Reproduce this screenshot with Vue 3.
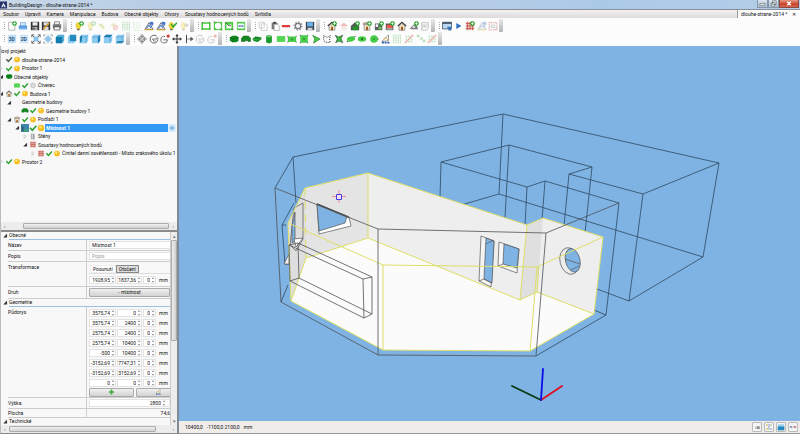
<script setup>
import { ref } from 'vue'

const menus = ['Soubor', 'Upravit', 'Kamera', 'Manipulace', 'Budova', 'Obecné objekty', 'Otvory', 'Soustavy hodnocených bodů', 'Svítidla']

// A trailing "~" marks a disabled command.
const toolbars = [
  [
    { width: 57, items: ['new', 'open', 'save', 'saveas', 'print'] },
    { width: 117, items: ['bulbadd', 'bulbadd~', 'bulbedit~', 'bulbdel~', 'grid~', 'points~', 'cad', 'cad', 'bulbok', 'bulbgo~'] },
    { width: 47, items: ['poly1', 'poly2', 'poly3', 'poly4'] },
    { width: 59, items: ['copy', 'paste', 'minus', 'gear', 'saveblue'] },
    { width: 105, items: ['houseadd', 'roofadd~', 'housegreen', 'floor', 'wallgreen', 'wallred', 'house', 'roofgreen', 'sheet~'] },
    { width: 58, items: ['window', 'play', 'redgrid', 'cad~', 'redframe~'] }
  ],
  [
    { width: 120, items: ['v3d', 'v2d', 'expand', 'fit', 'cube1', 'cube2', 'cube3', 'cube4', 'cube5', 'cube6'] },
    { width: 82, items: ['move', 'rotate', 'rotpoint', 'cross', 'align', 'rotate~', 'rotpoint~'] },
    { width: 210, items: ['prism', 'prism2', 'prism3', 'cylinder', 'rect', 'rectdot', 'sqdot', 'tri', 'polydash', 'star', 'ellipse', 'eye', 'disc', 'cadtext', 'grid~', 'cutgrid~', 'steps~', 'cutgrid~'] }
  ]
]

const tree = [
  { level: 0, icons: [], text: 'Nový projekt', root: true },
  { level: 0, exp: 'none', icons: ['checkdark', 'bulb'], text: 'dlouhe-strane-2014' },
  { level: 0, exp: 'closed', icons: ['check', 'bulb'], text: 'Prostor 1' },
  { level: 0, exp: 'open', icons: ['prism'], text: 'Obecné objekty' },
  { level: 1, exp: 'none', icons: ['rect', 'check', 'bulboff'], text: 'Čtverec' },
  { level: 0, exp: 'open', icons: ['house', 'check', 'bulb'], text: 'Budova 1' },
  { level: 1, exp: 'open', icons: ['blank'], text: 'Geometrie budovy' },
  { level: 2, exp: 'none', icons: ['prism2', 'check', 'bulb'], text: 'Geometrie budovy 1' },
  { level: 1, exp: 'open', icons: ['floorplain', 'check', 'bulb'], text: 'Podlaží 1' },
  { level: 2, exp: 'open', icons: ['room', 'check', 'bulb'], text: 'Místnost 1', selected: true },
  { level: 3, exp: 'closed', icons: ['walls'], text: 'Stěny' },
  { level: 3, exp: 'open', icons: ['pts'], text: 'Soustavy hodnocených bodů' },
  { level: 4, exp: 'closed', icons: ['pts', 'check', 'bulb'], text: 'Činitel denní osvětlenosti - Místo zrakového úkolu 1' },
  { level: 0, exp: 'closed', icons: ['check', 'bulb'], text: 'Prostor 2' }
]

const name = ref('Místnost 1')
const note = ref('')
const height = ref('2800')
const shift = ref(['1928,95', '1837,36', '0'])
const plan = ref([
  ['3575,74', '0', '0'],
  ['3575,74', '2400', '0'],
  ['2575,74', '2400', '0'],
  ['2575,74', '10400', '0'],
  ['-500', '10400', '0'],
  ['-3152,69', '7747,31', '0'],
  ['-3152,69', '3152,69', '0'],
  ['0', '0', '0']
])
const axes = ['X', 'Y', 'Z']
const statusButtons = ['sshape', 'sdots', 'sbox', 'sline']
const isOff = (n) => n.endsWith('~')
const bare = (n) => n.replace('~', '')
</script>

<template>
  <div class="app">
    <svg class="defs" aria-hidden="true">
      <defs>
        <symbol id="plus" viewBox="0 0 12 12"><circle cx="9" cy="3" r="2.8" fill="#25a32c" /><path d="M9 1.4v3.2M7.4 3h3.2" stroke="#fff" stroke-width="1" /></symbol>
        <symbol id="i-new" viewBox="0 0 12 12"><path d="M2 1.5h6.5l1 1.500v8H2z" fill="#fff" stroke="#999" stroke-width=".8" /><use href="#plus" width="12" height="12" /></symbol>
        <symbol id="i-open" viewBox="0 0 12 12"><path d="M3 2h6v4H3z" fill="#d5e8f8" stroke="#4c8fce" stroke-width=".7" /><path d="M1 5.500h10v4.500H1z" fill="#5a9fe0" /><path d="M2 9h8v1.500H2z" fill="#a8d0f4" /></symbol>
        <symbol id="i-save" viewBox="0 0 12 12"><path d="M1 1h10v10H1z" fill="#333" /><path d="M3 1.500h6v4H3z" fill="#eee" /><path d="M3 7h6v4H3z" fill="#aaa" /><path d="M4 8h1.500v2.500H4z" fill="#333" /></symbol>
        <symbol id="i-saveas" viewBox="0 0 12 12"><path d="M1 1h10v10H1z" fill="#333" /><path d="M3 1.500h6v4H3zM3 7h6v4H3z" fill="#ddd" /><path d="M3 9.500L10 2" stroke="#dd9c35" stroke-width="1.800" /></symbol>
        <symbol id="i-print" viewBox="0 0 12 12"><path d="M3 1h6v3H3z" fill="#fff" stroke="#555" stroke-width=".8" /><path d="M1 4h10v5H1z" fill="#777" /><path d="M2.500 7h7v3.800h-7z" fill="#f2f2f2" stroke="#444" stroke-width=".8" /></symbol>
        <symbol id="i-bulb" viewBox="0 0 12 12"><circle cx="6" cy="6" r="4.900" fill="#f7bd21" /><circle cx="5" cy="4.700" r="2" fill="#ffe37a" /></symbol>
        <symbol id="i-bulboff" viewBox="0 0 12 12"><circle cx="6" cy="6" r="4" fill="#ddd" stroke="#aaa" /></symbol>
        <symbol id="bigbulb" viewBox="0 0 12 12"><path d="M5 1.500a4 4 0 0 1 2.200 6.700v1.300H3.500V8A4 4 0 0 1 5 1.500z" fill="#f2d63a" stroke="#c9a71b" stroke-width=".5" /><path d="M3.700 9.500h3v1.600h-3z" fill="#666" /></symbol>
        <symbol id="i-bulbadd" viewBox="0 0 12 12"><use href="#bigbulb" width="12" height="12" /><use href="#plus" width="12" height="12" /></symbol>
        <symbol id="i-bulbedit" viewBox="0 0 12 12"><path d="M2 5l4-2 4 6-3 1z" fill="#c6d84e" /><path d="M2 3l6 5" stroke="#65a043" /></symbol>
        <symbol id="i-bulbdel" viewBox="0 0 12 12"><path d="M2 4l4-2 3 4-3 2z" fill="#d8c870" /><circle cx="8" cy="8" r="2.500" fill="none" stroke="#d33" /><path d="M6 10l4-4" stroke="#d33" /></symbol>
        <symbol id="i-bulbok" viewBox="0 0 12 12"><use href="#bigbulb" width="12" height="12" /><path d="M5 4l2.500 3L12 2" fill="none" stroke="#28a52b" stroke-width="1.800" /></symbol>
        <symbol id="i-bulbgo" viewBox="0 0 12 12"><use href="#bigbulb" width="12" height="12" /><path d="M6 5h5M9 3l2 2-2 2" fill="none" stroke="#555" /></symbol>
        <symbol id="i-grid" viewBox="0 0 12 12"><path d="M2 1v10M4.700 1v10M7.400 1v10M10 1v10" stroke="#43b049" stroke-width="1.400" stroke-dasharray="2 .7" /></symbol>
        <symbol id="i-points" viewBox="0 0 12 12"><path d="M1 2h10M2 5h8M1 8h9M3 11h8" stroke="#43b049" stroke-width="1.300" stroke-dasharray="1.400 2" /></symbol>
        <symbol id="i-cad" viewBox="0 0 12 12"><path d="M1 10L6 2l5 8z" fill="#e8eef8" stroke="#444" stroke-width=".8" /><path d="M3 9l3-4 2 3 3-5" stroke="#3b69c8" fill="none" stroke-width="1.200" /><path d="M7 1h4v3.500H7z" fill="#4a77ca" /><path d="M1 10.500h10" stroke="#d3a720" stroke-width="1.300" /></symbol>
        <symbol id="i-poly1" viewBox="0 0 12 12"><path d="M1.500 2.500h9v7h-9z" fill="#fff" stroke="#46c63f" stroke-width="1.800" /><path d="M1 2h1M10 2h1M1 10h1M10 10h1" stroke="#333" stroke-width="1" /></symbol>
        <symbol id="i-poly2" viewBox="0 0 12 12"><path d="M1 1h10v10H1z" fill="#4fc946" /><circle cx="6" cy="6" r="3.800" fill="#fff" /><path d="M1 1h1M10 11h1" stroke="#333" stroke-width="1" /></symbol>
        <symbol id="i-poly3" viewBox="0 0 12 12"><path d="M1 1h10v10H1z" fill="#4fc946" /><path d="M3 3l3 2 3-2v6H3z" fill="#fff" /><path d="M2 2l4 4 3-1M9 10h2" stroke="#333" fill="none" stroke-width=".8" /></symbol>
        <symbol id="i-poly4" viewBox="0 0 12 12"><path d="M1 1h10v10H1z" fill="#4fc946" /><path d="M2 3h8v6H2z" fill="#fff" /><path d="M3 6h6" stroke="#3563ae" stroke-width="1.800" stroke-dasharray="1.600 .6" /></symbol>
        <symbol id="i-copy" viewBox="0 0 12 12"><path d="M1.500 1.500h6v7h-6zM4 3.500h5l2 2v6H4z" fill="#fff" stroke="#bbb" stroke-width=".8" /></symbol>
        <symbol id="i-paste" viewBox="0 0 12 12"><path d="M2 2h7v8H2z" fill="#777" /><path d="M4 1h3v2H4z" fill="#333" /><path d="M5 4h4l2 2v5.500H5z" fill="#fff" stroke="#999" stroke-width=".8" /></symbol>
        <symbol id="i-minus" viewBox="0 0 12 12"><path d="M1 4.800h10v2.700H1z" fill="#df3d3d" /></symbol>
        <symbol id="i-gear" viewBox="0 0 12 12"><circle cx="6" cy="6" r="4.700" fill="none" stroke="#8b8f94" stroke-width="1.500" stroke-dasharray="2 1.600" /><circle cx="6" cy="6" r="3.200" fill="#f5f5f5" stroke="#777b80" stroke-width="1.400" /></symbol>
        <symbol id="i-saveblue" viewBox="0 0 12 12"><path d="M1 1h10v10H1z" fill="#3a424c" /><path d="M2.500 1.500h7v5h-7z" fill="#69b4ee" /><path d="M3 8h6v3H3z" fill="#ccd" /></symbol>
        <symbol id="i-house" viewBox="0 0 12 12"><path d="M1 6l5-4.500L11 6" fill="none" stroke="#3a3a3a" stroke-width="1.500" /><path d="M2.500 6L6 3l3.500 3v5h-7z" fill="#f3e3c4" stroke="#666" stroke-width=".7" /><path d="M4.800 7h2.400v4H4.800z" fill="#9a5a22" /></symbol>
        <symbol id="i-houseadd" viewBox="0 0 12 12"><use href="#i-house" width="12" height="12" /><use href="#plus" width="12" height="12" /></symbol>
        <symbol id="i-roofadd" viewBox="0 0 12 12"><path d="M1 6l5-4 5 4z" fill="#d44" /><path d="M3 6h6v5H3z" fill="#e6c5c0" /></symbol>
        <symbol id="i-housegreen" viewBox="0 0 12 12"><path d="M1 6l5-4.500L11 6v5H1z" fill="#555" /><path d="M3 6.500h7V11H3z" fill="#24952c" /><use href="#plus" width="12" height="12" /></symbol>
        <symbol id="i-floorplain" viewBox="0 0 12 12"><path d="M1 2l5-1 5 1v3H1z" fill="#b9a79b" /><path d="M2.500 4h7v7h-7z" fill="#ecdcc2" stroke="#777" stroke-width=".7" /><path d="M4.800 7h2.400v4H4.800z" fill="#a05d25" /></symbol>
        <symbol id="i-floor" viewBox="0 0 12 12"><use href="#i-floorplain" width="12" height="12" /><use href="#plus" width="12" height="12" /></symbol>
        <symbol id="i-wallgreen" viewBox="0 0 12 12"><path d="M1 3h9v8H1z" fill="#5b6063" /><path d="M2 4h3v3H2z" fill="#fff" /><path d="M5.500 7H9v3H5.500z" fill="#70c85d" /><use href="#plus" width="12" height="12" /></symbol>
        <symbol id="i-wallred" viewBox="0 0 12 12"><path d="M1 3h9v8H1z" fill="#555" /><path d="M2 4.500h7v4H2z" fill="#ea5a4c" /><path d="M2 9h7v1H2z" fill="#fff" /><use href="#plus" width="12" height="12" /></symbol>
        <symbol id="i-roofgreen" viewBox="0 0 12 12"><path d="M1 9l5-5 3 1 2 5H3z" fill="#777" /><path d="M3 8l3-3 2 3z" fill="#e8e8e8" /><use href="#plus" width="12" height="12" /></symbol>
        <symbol id="i-sheet" viewBox="0 0 12 12"><path d="M2 2h8v7l-2 2H2z" fill="#eee" stroke="#444" /><path d="M3 5h6M3 7h5" stroke="#444" /></symbol>
        <symbol id="i-window" viewBox="0 0 12 12"><path d="M.5 1.500h11v8H.5z" fill="#bcd7f2" stroke="#45566a" /><path d="M.5 1.500h11v2H.5z" fill="#45566a" /><path d="M6 7h5v4.500H8z" fill="#3f72b7" /></symbol>
        <symbol id="i-play" viewBox="0 0 12 12"><path d="M4 2.500L10 6 4 9.500z" fill="#2f6fc0" /></symbol>
        <symbol id="i-pts" viewBox="0 0 12 12"><path d="M1 1h10v10H1z" fill="#f3cfc9" /><path d="M1 3h10M1 6h10M1 9h10M3 1v10M6 1v10M9 1v10" stroke="#bb5548" stroke-width="1" /></symbol>
        <symbol id="i-redgrid" viewBox="0 0 12 12"><use href="#i-pts" width="12" height="12" /><use href="#plus" width="12" height="12" /></symbol>
        <symbol id="i-redframe" viewBox="0 0 12 12"><path d="M1.500 2h9v8.500h-9z" fill="none" stroke="#b33" stroke-width="1.500" stroke-dasharray="1.500 .8" /><path d="M4 5h4v3H4z" fill="#fff" stroke="#555" /></symbol>

        <symbol id="i-v3d" viewBox="0 0 12 12"><path d="M1 2l2-1h8v9l-2 1H1z" fill="#bedcf4" /><text x="2" y="8.500" font-size="6" font-weight="700" fill="#2a5780">3D</text></symbol>
        <symbol id="i-v2d" viewBox="0 0 12 12"><path d="M1 1h10v10H1z" fill="#cfe4f5" /><text x="2" y="8.500" font-size="6" font-weight="700" fill="#2a5780">2D</text></symbol>
        <symbol id="i-expand" viewBox="0 0 12 12"><path d="M3 3h6v6H3z" fill="#8cc6f0" /><path d="M1 4V1h3M8 1h3v3M11 8v3H8M4 11H1V8M1 1l3 3M11 1L8 4M11 11L8 8M1 11l3-3" fill="none" stroke="#555" stroke-width="1" /></symbol>
        <symbol id="i-fit" viewBox="0 0 12 12"><path d="M3 3h6v6H3z" fill="#8cc6f0" /><path d="M1 3V1h2M9 1h2v2M11 9v2H9M3 11H1V9M6 1v2M6 9v2M1 6h2M9 6h2" fill="none" stroke="#87929c" /></symbol>
        <symbol id="cube" viewBox="0 0 12 12"><path d="M1 3.500L3.500 1H11v7.500L8.500 11H1z" fill="#8dccf1" /><path d="M1 3.500h7.500V11M8.500 3.500L11 1" fill="none" stroke="#4192c7" stroke-width=".7" /></symbol>
        <symbol id="i-cube1" viewBox="0 0 12 12"><path d="M1 3.500L3.500 1H11v7.500L8.500 11H1z" fill="#55abd8" /><path d="M1 3.500h7.500V11H1z" fill="#127eae" /></symbol>
        <symbol id="i-cube2" viewBox="0 0 12 12"><path d="M1 3.500L3.500 1H11v7.500L8.500 11H1z" fill="#8dccf1" /><path d="M3.500 1H11v7.500H3.500z" fill="#2689bd" /></symbol>
        <symbol id="i-cube3" viewBox="0 0 12 12"><use href="#cube" width="12" height="12" /><path d="M1 3.500L3.500 1v7.500L1 11z" fill="#1c7cae" /></symbol>
        <symbol id="i-cube4" viewBox="0 0 12 12"><use href="#cube" width="12" height="12" /><path d="M8.500 3.500L11 1v7.500L8.500 11z" fill="#1c7cae" /></symbol>
        <symbol id="i-cube5" viewBox="0 0 12 12"><use href="#cube" width="12" height="12" /><path d="M1 3.500L3.500 1H11L8.500 3.500z" fill="#1c7cae" /></symbol>
        <symbol id="i-cube6" viewBox="0 0 12 12"><use href="#cube" width="12" height="12" /><path d="M1 11l2.500-2.500H11L8.500 11z" fill="#2b86b6" /></symbol>
        <symbol id="i-move" viewBox="0 0 12 12"><path d="M6 .5l2 2.500H4zM6 11.500l2-2.500H4zM.5 6L3 4v4zM11.500 6L9 4v4zM4.500 4.500h3v3h-3z" fill="#fff" stroke="#555" stroke-width=".8" /></symbol>
        <symbol id="i-rotate" viewBox="0 0 12 12"><path d="M9 2.500A4.700 4.700 0 1 0 10.700 7" fill="none" stroke="#666" stroke-width="1.200" /><path d="M4 6h7l-2-2.500M4 6l2 2.500h2" fill="none" stroke="#555" stroke-width=".9" /></symbol>
        <symbol id="i-rotpoint" viewBox="0 0 12 12"><path d="M6 3A4 4 0 1 0 9 7" fill="none" stroke="#777" stroke-width="1.200" /><path d="M4 7h5" stroke="#555" /><circle cx="9.800" cy="2.500" r="1.900" fill="#d33a2c" /></symbol>
        <symbol id="i-cross" viewBox="0 0 12 12"><path d="M6 1v10M1 6h10" stroke="#333" stroke-width="1.200" /><path d="M6 0l2 2.700H4zM6 12l2-2.700H4zM0 6l2.700-2v4zM12 6L9.300 4v4z" fill="#333" /></symbol>
        <symbol id="i-align" viewBox="0 0 12 12"><path d="M3 1v10" stroke="#444" stroke-width="1.200" /><path d="M4 6h4M8 4l3 2-3 2z" stroke="#555" stroke-width=".8" fill="#555" /></symbol>
        <symbol id="i-prism" viewBox="0 0 12 12"><path d="M1 4l3-2h5l2.500 2v4L9 10H4L1 8z" fill="#128a21" /><path d="M1 4l3 1.500h4.500L11.500 4M5 5.500V10" fill="none" stroke="#075c11" stroke-width=".7" /></symbol>
        <symbol id="i-prism2" viewBox="0 0 12 12"><path d="M.5 5L3 2.500h6L11.500 5v4h-3V8h-4v1h-4z" fill="#128a21" stroke="#075c11" stroke-width=".6" /></symbol>
        <symbol id="i-prism3" viewBox="0 0 12 12"><path d="M.5 6L4 3l7 1 .5 2L7 9.500 2 8.500z" fill="#128a21" /><path d="M.5 6l6 1 4.500-3" fill="none" stroke="#65c06a" stroke-width=".7" /></symbol>
        <symbol id="i-cylinder" viewBox="0 0 12 12"><path d="M2.500 2.500v7c1.500 2 5.500 2 7 0v-7z" fill="#1c9a2e" /><ellipse cx="6" cy="2.700" rx="3.500" ry="1.600" fill="#62c568" /></symbol>
        <symbol id="i-rect" viewBox="0 0 12 12"><path d="M1 2.500h10v7H1z" fill="#51d552" /></symbol>
        <symbol id="i-rectdot" viewBox="0 0 12 12"><path d="M1 3h10v6.500H1z" fill="#45cb45" /><path d="M.5 2.700h1M10.500 2.700h1M.5 9.700h1M10.500 9.700h1M5.300 6.200h1.500" stroke="#233" stroke-width="1.100" /></symbol>
        <symbol id="i-sqdot" viewBox="0 0 12 12"><path d="M1.500 1.500h9v9h-9z" fill="#45cb45" /><path d="M1 1.500h1M10 1.500h1M1 10.500h1M10 10.500h1M5.300 6h1.500" stroke="#233" stroke-width="1.100" /></symbol>
        <symbol id="i-tri" viewBox="0 0 12 12"><path d="M2 1.500l9 4.500-8 5 1.500-5z" fill="#45cb45" stroke="#257a28" stroke-width=".7" /></symbol>
        <symbol id="i-polydash" viewBox="0 0 12 12"><path d="M2 2l4 2 4-2-1 5 1 3H4L2 7z" fill="none" stroke="#333" stroke-width="1.200" stroke-dasharray="1.300 1.300" /></symbol>
        <symbol id="i-star" viewBox="0 0 12 12"><path d="M1.500 1.500l4 2 5-2-2 4 2 5-4.500-2-4 2 2-4.500z" fill="#3dba3f" stroke="#243" stroke-width=".7" /></symbol>
        <symbol id="i-ellipse" viewBox="0 0 12 12"><ellipse cx="6" cy="6" rx="5" ry="3" transform="rotate(-15 6 6)" fill="#45cb45" /><path d="M10 3h1.500M1 9h1.500" stroke="#233" stroke-width="1" /></symbol>
        <symbol id="i-eye" viewBox="0 0 12 12"><ellipse cx="6" cy="6" rx="5" ry="3.200" fill="#45cb45" /><circle cx="6" cy="6" r="1.200" fill="#165d1a" /></symbol>
        <symbol id="i-disc" viewBox="0 0 12 12"><circle cx="6" cy="6" r="4.600" fill="#45cb45" /><path d="M5.300 6h1.500M10 6h1.500" stroke="#165d1a" stroke-width="1.400" /></symbol>
        <symbol id="i-cadtext" viewBox="0 0 12 12"><path d="M1 9L9 1v7z" fill="#fff" stroke="#777" stroke-width=".8" /><path d="M3 7l3-3 3 4" stroke="#d9a21d" fill="none" /><path d="M1 10.300h10" stroke="#315eb0" stroke-width="2" stroke-dasharray="2.500 .8" /></symbol>
        <symbol id="i-cutgrid" viewBox="0 0 12 12"><path d="M2 3h8M2 6h8M2 9h8" stroke="#43b049" stroke-width="2" stroke-dasharray="2 1" /><path d="M1 11L11 1" stroke="#e11" stroke-width="1.500" /></symbol>
        <symbol id="i-steps" viewBox="0 0 12 12"><path d="M1 1h3v3H1zM5 4h3v3H5zM8 7h3v3H8z" fill="#43b049" /></symbol>

        <symbol id="i-check" viewBox="0 0 12 12"><path d="M1.500 5.500L5 9.500 11 2.500" fill="none" stroke="#2ca02c" stroke-width="2.400" /></symbol>
        <symbol id="i-checkdark" viewBox="0 0 12 12"><path d="M1.500 5.500L5 9.500 11 2.500" fill="none" stroke="#4b5a4b" stroke-width="2.400" /></symbol>
        <symbol id="i-blank" viewBox="0 0 12 12" />
        <symbol id="i-room" viewBox="0 0 12 12"><path d="M0 0h12v12H0z" fill="#3f86ae" /><path d="M1 3l3 1v7H1z" fill="#2c5f77" /><path d="M4 8h7v3H4z" fill="#47a06b" /></symbol>
        <symbol id="i-walls" viewBox="0 0 12 12"><path d="M3 1v10M6 1l2 2v7l-2 1z" fill="#ddd" stroke="#666" /></symbol>
        <symbol id="i-open-arrow" viewBox="0 0 12 12"><path d="M9.500 3v6.500H3z" fill="#333" /></symbol>
        <symbol id="i-closed-arrow" viewBox="0 0 12 12"><path d="M4.500 2.500L8 6 4.500 9.500z" fill="#fff" stroke="#aaa" /></symbol>
        <symbol id="i-none-arrow" viewBox="0 0 12 12" />
        <symbol id="i-snow" viewBox="0 0 12 12"><path d="M0 0h12v12H0z" fill="#e4f1fd" /><path d="M6 1v10M1 6h10M2.500 2.500l7 7M9.500 2.500l-7 7" stroke="#69aee9" stroke-width="1" /><circle cx="6" cy="6" r="2" fill="#6cb1ea" /></symbol>
        <symbol id="i-updown" viewBox="0 0 6 12"><path d="M1 4l2-2.500L5 4M1 8l2 2.500L5 8" fill="none" stroke="#555" stroke-width="1.200" /></symbol>
        <symbol id="i-addgreen" viewBox="0 0 12 12"><path d="M6 1v10M1 6h10" stroke="#3bab35" stroke-width="3.200" /></symbol>
        <symbol id="i-sshape" viewBox="0 0 12 12"><path d="M3 5h3v4H3z" fill="#ccc" /><path d="M6 5h4v4H6z" fill="#888" /></symbol>
        <symbol id="i-sdots" viewBox="0 0 12 12"><path d="M2 3h2M2 9h2" stroke="#d4b23c" stroke-width="2" /><path d="M5 3h2M8 9h2M5 6h2" stroke="#a292dc" stroke-width="2" /><path d="M8 3h2M5 9h2" stroke="#7fcf7f" stroke-width="2" /></symbol>
        <symbol id="i-sbox" viewBox="0 0 12 12"><path d="M2 2h8l1 3H1z" fill="#9cd2ef" /><path d="M1 5h10v6H1z" fill="#2489bd" /></symbol>
        <symbol id="i-sline" viewBox="0 0 12 12"><path d="M1 6h10" stroke="#999" /><path d="M2 6h2" stroke="#3c6fc0" stroke-width="2.500" /><path d="M8 6h2" stroke="#cc3a3a" stroke-width="2.500" /></symbol>
      </defs>
    </svg>

    <header class="titlebar">
      <svg class="logo" viewBox="0 0 12 12" aria-hidden="true"><path d="M0 0h12v12H0z" fill="#27336d" /><path d="M2 10L6 2l4 8H7.500L6 7l-1.500 3z" fill="#e9edf8" /></svg>
      <h1>BuildingDesign - dlouhe-strane-2014 *</h1>
      <div class="winbtns">
        <button aria-label="Minimalizovat"><svg viewBox="0 0 10 8"><path d="M2 4h6v2H2z" fill="#fff" stroke="#566" stroke-width=".7" /></svg></button>
        <button aria-label="Obnovit"><svg viewBox="0 0 10 8"><path d="M4 1h4v4H4zM2.500 3h4v4h-4z" fill="#fff" stroke="#566" stroke-width=".8" /></svg></button>
        <button class="close" aria-label="Zavřít"><svg viewBox="0 0 10 8"><path d="M3 2l4 4M7 2L3 6" stroke="#fff" stroke-width="1.600" /></svg></button>
      </div>
    </header>

    <div class="menubar">
      <nav><a v-for="m in menus" :key="m" href="#">{{ m }}</a></nav>
      <div class="doctab"><span>dlouhe-strane-2014 *</span><button aria-label="Zavřít kartu">✕</button></div>
    </div>

    <div class="toolbars">
      <div v-for="(row, r) in toolbars" :key="r" class="toolrow">
        <div v-for="(g, i) in row" :key="i" class="toolgroup">
          <span class="grip"></span>
          <div class="tools" :style="{ width: g.width + 'px' }">
            <button v-for="(t, k) in g.items" :key="k" :class="{ off: isOff(t) }" :disabled="isOff(t)" :aria-label="bare(t)">
              <svg class="ico"><use :href="'#i-' + bare(t)" /></svg>
            </button>
          </div>
          <span class="more"></span>
        </div>
      </div>
    </div>

    <main class="body">
      <aside class="side">
        <section class="treepane">
          <ul class="tree">
            <li v-for="(n, i) in tree" :key="i" :style="{ paddingLeft: n.level * 8 + 'px' }">
              <svg v-if="n.exp" class="slot"><use :href="'#i-' + n.exp + '-arrow'" /></svg>
              <div class="node" :class="{ selected: n.selected, root: n.root }">
                <svg v-for="(ic, k) in n.icons" :key="k" class="slot"><use :href="'#i-' + ic" /></svg>
                <span class="label">{{ n.text }}</span>
                <svg v-if="n.selected" class="slot snow"><use href="#i-snow" /></svg>
              </div>
            </li>
          </ul>
          <div class="hscroll"><span>‹</span><i class="lead"></i><b class="long"></b><span>›</span></div>
        </section>

        <section class="props">
          <div class="propmain">
            <div class="proplist">
              <h2><svg class="slot"><use href="#i-open-arrow" /></svg><span>Obecné</span></h2>
              <div class="prow"><label for="f-name">Název</label><div class="val"><input id="f-name" v-model="name" class="wide" /></div></div>
              <div class="prow"><label for="f-note">Popis</label><div class="val"><input id="f-note" v-model="note" class="wide" placeholder="Popis" /></div></div>
              <div class="prow transform">
                <span class="cap">Transformace</span>
                <div class="val">
                  <div class="tabs"><button class="on">Posunutí</button><button>Otočení</button></div>
                  <div class="spins tabbody">
                    <span v-for="(v, k) in shift" :key="k" class="spin"><input v-model="shift[k]" :aria-label="'Posunutí ' + axes[k]" /><svg><use href="#i-updown" /></svg></span>
                    <span class="unit">mm</span>
                  </div>
                </div>
              </div>
              <div class="prow"><span class="cap">Druh</span><div class="val"><button class="btn">- místnost</button></div></div>
              <h2><svg class="slot"><use href="#i-open-arrow" /></svg><span>Geometrie</span></h2>
              <div class="prow">
                <span class="cap">Půdorys</span>
                <div class="val plan">
                  <div v-for="(p, i) in plan" :key="i" class="spins">
                    <span v-for="(v, k) in p" :key="k" class="spin"><input v-model="plan[i][k]" :aria-label="'Bod ' + (i + 1) + ' ' + axes[k]" /><svg><use href="#i-updown" /></svg></span>
                    <span class="unit">mm</span>
                  </div>
                  <div class="pair">
                    <button class="btn" aria-label="Přidat bod"><svg class="mini"><use href="#i-addgreen" /></svg></button>
                    <button class="btn" aria-label="Kreslit"><svg class="mini"><use href="#i-cadtext" /></svg></button>
                  </div>
                </div>
              </div>
              <div class="prow"><label for="f-height">Výška</label><div class="val"><span class="spin full"><input id="f-height" v-model="height" /><svg><use href="#i-updown" /></svg></span></div></div>
              <div class="prow area"><span class="cap">Plocha</span><div class="val"><output>74,6</output></div></div>
              <h2><svg class="slot"><use href="#i-open-arrow" /></svg><span>Technické</span></h2>
            </div>
            <div class="vscroll"><span>▴</span><b></b><i></i><span>▾</span></div>
          </div>
          <div class="hscroll"><span>‹</span><b class="mid"></b><i class="trail"></i><span>›</span></div>
        </section>
      </aside>

      <section class="stage">
        <svg class="scene" viewBox="179 46 621 375" preserveAspectRatio="xMidYMid slice" role="img" aria-label="Model">
          <g class="wire">
            <path d="M275 188L293 157 503 114 719 163 703 257 629 301 643 194 569 174 592 167 509 145 441 162 527 187 545 181 619 203 606 315 536 356" />
            <path d="M719 163L643 194M703 257L499 194 306 250M503 114L499 194M509 145L505 218M441 162L440 198M527 187L525 226M545 181L542 220M569 174L564 226M592 167L585 233M629 301L597 289M606 315L594 310M293 157L296 203" />
            <path d="M294 203L282 225 285 264 289 264M282 225L286 225M281 302L288 285" />
          </g>
          <path d="M305 188L368 173 527 225 543 218 603 237 594 314 530 351 383 350 291 301 288 223z" fill="#eeeeee" />
          <path d="M305 188L368 173V238L306 258z" fill="#e4e4e4" />
          <path d="M305 188L306 258 291 301 288 223z" fill="#dedede" />
          <path d="M527 225L543 218 537 292 520 300z" fill="#dfdfdf" />
          <path d="M368 238L520 300 537 292 594 314 530 351 383 350 291 301 306 258z" fill="#fbfbfb" />
          <g class="hole">
            <path d="M317 204L349 217 351 226 319 234z" fill="#fff" />
            <path d="M317 204L347 216 345 223 319 231z" class="sky" />
            <path d="M317 204L349 217.500" stroke-width="1.400" />
            <path d="M294 208L303 203V239L296 251 290 245z" fill="#ddd" />
            <path d="M292 226L295 212V241L292 243z" class="sky" />
            <path d="M284 264L289 254V264z" fill="#f5f5f5" />
            <path d="M294 239L303 238 296 247z" fill="#fff" />
            <path d="M481 236L494 241 491 287 479 281z" fill="#f4f4f4" />
            <path d="M486 238L494 241 492 283 484 279z" class="sky" />
            <path d="M486 244L494 240M479 281L484 279 492 283" fill="none" />
            <path d="M499 242L519 249 517 273 498 266z" fill="#f7f7f7" />
            <path d="M504 244L519 249 517 268 503 264z" class="sky" />
            <path d="M498 266L503 264" />
            <ellipse cx="569.500" cy="261" rx="9.500" ry="13.500" transform="rotate(-14 569.500 261)" fill="#ececec" />
            <ellipse cx="572.700" cy="260.300" rx="7.200" ry="12" transform="rotate(-14 572.700 260.300)" class="sky" />
            <path d="M565 259L580 264M571 270L579 266" />
          </g>
          <g class="yellow">
            <path d="M305 188L368 173 527 225 543 218 603 237 594 314 530 351 383 350 291 301 288 223z" />
            <path d="M368 173V238L520 300 537 292 594 314M368 238L306 258 291 301M527 225L520 300" />
            <path d="M288 223L383 265 537 267 603 237M383 265V350M537 267L530 351M539 266L537 292" />
            <path d="M305 188L306 258" stroke-dasharray="8 5" />
          </g>
          <g class="wire front">
            <path d="M275 188L281 302 378 355 536 356 546 233 378 229zM378 229V355M546 233L619 203" />
            <path d="M289 245L298 243 372 277V314L364 318 290 281zM289 245L363 279 372 277M363 279L364 318M298 243L299 278 372 314M290 281L299 278" />
          </g>
          <path d="M339 190v13M332 196.500h14" stroke="#ee8f96" />
          <path d="M336.500 194.500h5v5h-5z" fill="#ece3ee" stroke="#4c3be0" />
          <g fill="none" stroke-width="1.800" stroke-linecap="round">
            <path d="M541 400L512 386" stroke="#063a10" />
            <path d="M541 400L562 386" stroke="#e00b1c" />
            <path d="M541 400L543 369" stroke="#0c0ce8" />
          </g>
        </svg>
        <footer class="status">
          <span>10400,0</span><span class="pos">-1100,0 2100,0</span><span>mm</span>
          <div class="sbtns"><button v-for="b in statusButtons" :key="b" :aria-label="b"><svg><use :href="'#i-' + b" /></svg></button></div>
        </footer>
      </section>
    </main>
  </div>
</template>

<style>
body { margin: 0; }
</style>

<style scoped>
.app {
  display: flex;
  flex-direction: column;
  height: 100vh;
  overflow: hidden;
  background: #f8f8f8;
  color: #111;
  font: 5px/8px Roboto, "Open Sans", sans-serif;
}
.app * { box-sizing: border-box; }
.defs { position: absolute; width: 0; height: 0; }
button, input { font: inherit; color: inherit; margin: 0; padding: 0; border: 0; background: none; min-width: 0; }
svg { display: block; }
ul, h1, h2 { margin: 0; padding: 0; font: inherit; list-style: none; }

.titlebar {
  display: flex;
  align-items: center;
  gap: 2px;
  height: 9px;
  flex: none;
  background: linear-gradient(90deg, #c9d8e8, #b3cbe5 25%, #b5cce7 60%, #abcae7 75%, #b4cde8);
}
.logo { width: 7px; height: 8px; }
.titlebar h1 { flex: 1; }
.winbtns { display: flex; align-self: flex-start; padding-right: 1px; }
.winbtns button { width: 11px; height: 8px; border: 1px solid #8497ac; border-top: 0; background: linear-gradient(#dce6f0, #a9bcd0); }
.winbtns .close { width: 20px; background: linear-gradient(#e59a86, #c8402b 60%, #d96a50); border-color: #8c4a44; }
.winbtns svg { width: 100%; height: 7px; }

.menubar {
  display: flex;
  justify-content: space-between;
  height: 9px;
  flex: none;
  border-top: 1px solid #8a8f96;
  background: linear-gradient(#f3f1f1, #dcdada);
}
nav { display: flex; gap: 6px; padding-left: 3px; }
nav a { color: inherit; text-decoration: none; white-space: nowrap; }
.doctab { display: flex; justify-content: space-between; width: 63px; padding: 0 4px 0 3px; background: #fcfcfc; border-left: 1px solid #999; }

.toolbars { flex: none; padding: 1px 0 0 3px; height: 28px; background: #fcfcfc; }
.toolrow { display: flex; gap: 3px; height: 13px; }
.toolgroup { display: flex; }
.grip { width: 1px; margin: 3px 1px; border-left: 1px dotted #aaa; }
.tools { display: flex; align-items: center; }
.tools button { flex: 1; display: flex; justify-content: center; }
.tools .off { opacity: .35; }
.ico { width: 10px; height: 10px; }
.more { width: 4px; background: linear-gradient(#e8e8e8, #b4b4b4); border-radius: 0 1px 1px 0; }

.body { display: flex; flex: 1; min-height: 0; }
.side {
  display: grid;
  grid-template-rows: 186fr 202fr;
  grid-template-columns: minmax(0, 1fr);
  width: 179px;
  flex: none;
  border-left: 1px solid #bbb;
  border-right: 2px solid #7f8a94;
  border-bottom: 1px solid #888;
}
.treepane { display: flex; flex-direction: column; min-height: 0; overflow: hidden; border-bottom: 2px solid #8b8b8b; }
.tree {
  display: grid;
  grid-template-rows: repeat(7, 8px 9px);
  grid-template-columns: minmax(0, 1fr);
  flex: 1;
  align-content: start;
  margin-left: -4px;
  padding: 1px 1px 0 0;
  overflow: hidden;
}
.tree li { display: flex; align-items: center; min-width: 0; }
.slot { width: 8px; height: 7px; flex: none; }
.node { display: flex; flex: 1; align-items: center; min-width: 0; height: 8px; white-space: nowrap; }
.selected { background: #3399f5; color: #fff; font-weight: 700; }
.selected .slot { background: #f4f8fc; height: 8px; }
.selected .label { flex: 1; }
.label { padding-left: 1px; }

.hscroll { display: flex; align-items: center; gap: 3px; height: 8px; flex: none; padding: 0 3px; background: #ececec; color: #555; }
.hscroll b, .vscroll b { border: 1px solid #adadad; border-radius: 1px; background: linear-gradient(#f0f0f0, #d3d3d3); }
.hscroll b { height: 6px; }
.hscroll .lead { flex: 12; }
.hscroll .long { flex: 147; }
.hscroll .mid { flex: 146; }
.hscroll .trail { flex: 10; }

.props { display: flex; flex-direction: column; min-height: 0; min-width: 0; }
.propmain { display: flex; flex: 1; min-height: 0; }
.proplist { flex: 1; min-width: 0; overflow: hidden; }
.vscroll { display: flex; flex-direction: column; align-items: center; width: 7px; flex: none; background: #ededed; color: #777; border-left: 1px solid #ccc; }
.vscroll b { flex: 102; width: 6px; background: linear-gradient(90deg, #eee, #d0d0d0); }
.vscroll i { flex: 78; }
h2 { display: flex; align-items: center; height: 8px; }
h2 span { flex: 1; height: 8px; line-height: 7px; border-bottom: 1px solid #9dbfe0; }
.prow { display: flex; min-height: 11px; margin-left: 7px; border-bottom: 1px solid #ccc; }
.prow > label, .cap { width: 79px; flex: none; line-height: 10px; border-right: 1px solid #ccc; }
.val { flex: 1; min-width: 0; padding: 1px 0 1px 2px; overflow: hidden; }
.wide { display: block; width: 100%; height: 8px; padding-left: 2px; background: #fff; border: 1px solid #e2e2e2; border-right: 0; line-height: 6px; }
.wide::placeholder { color: #999; opacity: 1; }
.transform { height: 25px; }
.tabs { display: flex; padding: 2px 0 0 1px; }
.tabs button { height: 8px; padding: 0 2px; line-height: 7px; border: 1px solid #888; background: #ddd; }
.tabs .on { background: #fff; border-color: #eee; }
.tabbody { border-top: 1px solid #ddd; padding-top: 2px; }
.spins { display: grid; grid-template-columns: 27px 25px 13px 12px; gap: 1px; height: 10px; align-items: center; }
.spin { display: flex; align-items: center; height: 8px; border: 1px solid #e3e3e3; background: #fff; }
.spin input { flex: 1; width: 0; height: 6px; padding-right: 1px; text-align: right; line-height: 6px; }
.spin svg { width: 4px; height: 6px; flex: none; }
.unit { padding-left: 2px; }
.plan { padding: 1px 0 0 2px; }
.pair { display: grid; grid-template-columns: 45px 45px; gap: 2px; }
.btn { display: flex; align-items: center; justify-content: center; width: 100%; height: 9px; border: 1px solid #aaa; border-radius: 1px; background: linear-gradient(#f0f0f0, #d2d2d2); line-height: 7px; }
.mini { width: 7px; height: 6px; }
.full { width: 100%; padding-right: 3px; }
.area { min-height: 9px; }
.area .cap { line-height: 8px; }
.area .val { padding: 0; text-align: right; }

.stage { display: flex; flex-direction: column; flex: 1; min-width: 0; background: #7fb3e4; }
.scene { flex: 1; width: 100%; min-height: 0; }
.wire { fill: none; stroke: #2f4960; stroke-width: .8; }
.front { stroke: #4c5257; }
.hole { stroke: #555; stroke-width: .7; }
.sky { fill: #7fb3e4; }
.yellow { fill: none; stroke: #dede68; stroke-width: 1; }
.status { display: flex; align-items: center; gap: 4px; height: 13px; flex: none; padding: 0 2px 0 6px; background: #f0ecea; border-bottom: 1px solid #999; }
.sbtns { display: flex; gap: 2px; margin-left: auto; }
.sbtns button { width: 10px; height: 10px; border: 1px solid #bbb; border-radius: 1px; background: #f4f4f4; }
.sbtns svg { width: 8px; height: 8px; }
</style>
